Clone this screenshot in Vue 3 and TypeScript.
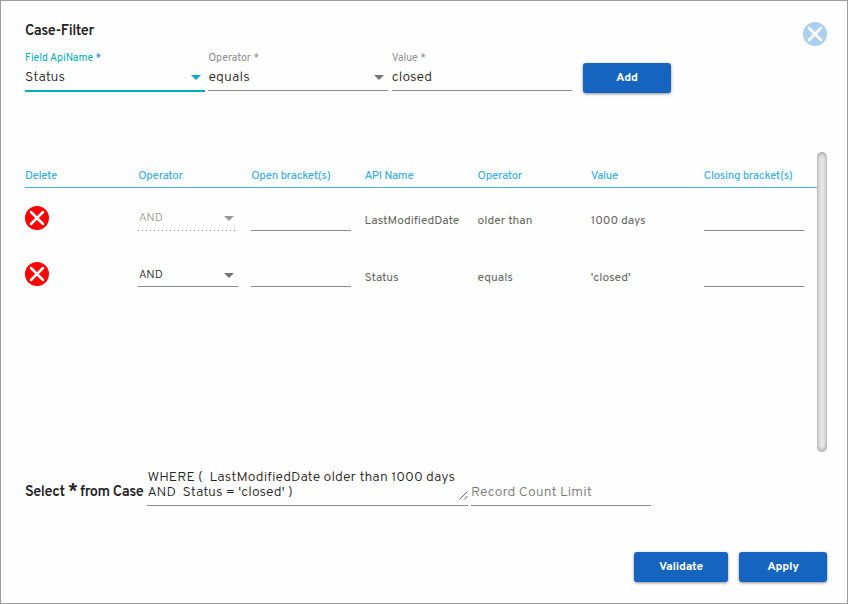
<script setup lang="ts">
import { ref } from 'vue'

interface Condition {
  id: number
  locked: boolean
  join: string
  open: string
  field: string
  operator: string
  value: string
  close: string
}

const fieldName = ref('Status')
const operator = ref('equals')
const filterValue = ref('closed')
const recordLimit = ref('')
const query = ref("WHERE (  LastModifiedDate older than 1000 days\nAND  Status = 'closed' )")

const conditions = ref<Condition[]>([
  { id: 1, locked: true, join: 'AND', open: '', field: 'LastModifiedDate', operator: 'older than', value: '1000 days', close: '' },
  { id: 2, locked: false, join: 'AND', open: '', field: 'Status', operator: 'equals', value: "'closed'", close: '' },
])

function remove(id: number) {
  conditions.value = conditions.value.filter((c) => c.id !== id)
}
</script>

<template>
  <main class="dialog">
    <header class="head">
      <h1 class="title">Case-Filter</h1>
      <button class="icon-btn close" aria-label="Close">
        <svg viewBox="0 0 24 24" width="24" height="24">
          <circle cx="12" cy="12" r="12" fill="#abcfee" />
          <path d="M6 6 18 18M18 6 6 18" stroke="#fff" stroke-width="2.7" stroke-linecap="round" />
        </svg>
      </button>
    </header>

    <section class="form">
      <div class="field active">
        <div class="label"><span>Field ApiName</span> <span class="star">*</span></div>
        <div class="control">
          <span>{{ fieldName }}</span>
          <svg class="arrow" width="10" height="5" viewBox="0 0 10 5"><path d="M0 0h10L5 5z" fill="currentColor" /></svg>
        </div>
      </div>
      <div class="field">
        <div class="label">Operator *</div>
        <div class="control">
          <span>{{ operator }}</span>
          <svg class="arrow" width="10" height="5" viewBox="0 0 10 5"><path d="M0 0h10L5 5z" fill="currentColor" /></svg>
        </div>
      </div>
      <div class="field">
        <div class="label">Value *</div>
        <div class="control"><span>{{ filterValue }}</span></div>
      </div>
      <button class="btn add">Add</button>
    </section>

    <section class="list">
      <div class="table">
        <div class="row thead">
          <span>Delete</span>
          <span>Operator</span>
          <span>Open bracket(s)</span>
          <span>API Name</span>
          <span>Operator</span>
          <span>Value</span>
          <span>Closing bracket(s)</span>
        </div>
        <div v-for="c in conditions" :key="c.id" class="row item">
          <button class="icon-btn" aria-label="Delete" @click="remove(c.id)">
            <svg viewBox="0 0 24 24" width="24" height="24">
              <circle cx="12" cy="12" r="12" fill="#f00" />
              <path d="M6 6 18 18M18 6 6 18" stroke="#fff" stroke-width="2.5" stroke-linecap="round" />
            </svg>
          </button>
          <div class="select" :class="{ locked: c.locked }">
            <span>{{ c.join }}</span>
            <svg class="arrow" width="10" height="5" viewBox="0 0 10 5"><path d="M0 0h10L5 5z" fill="currentColor" /></svg>
          </div>
          <div class="bracket">{{ c.open }}</div>
          <span class="cell">{{ c.field }}</span>
          <span class="cell">{{ c.operator }}</span>
          <span class="cell">{{ c.value }}</span>
          <div class="bracket">{{ c.close }}</div>
        </div>
      </div>
      <div class="scrollbar"></div>
    </section>

    <section class="query">
      <div class="select-text">Select <span class="big-star">*</span> from Case</div>
      <div class="where">
        <div class="where-text">{{ query }}</div>
        <svg class="grip" width="9" height="9" viewBox="0 0 9 9"><path d="M.5 8.5l8-8M5 8.5 8.5 5" stroke="#555" stroke-width=".9" fill="none" /></svg>
      </div>
      <div class="limit">{{ recordLimit || 'Record Count Limit' }}</div>
    </section>

    <footer class="actions">
      <button class="btn validate">Validate</button>
      <button class="btn">Apply</button>
    </footer>
  </main>
</template>

<style>
body {
  background: #fff;
}
</style>

<style scoped>
.dialog {
  box-sizing: border-box;
  width: 848px;
  height: 604px;
  padding: 21px 20px 0 24px;
  border: 1px solid #9c9c9c;
  background: #fefefe;
  font-family: Overpass, Roboto, "Liberation Sans", sans-serif;
  color: #333;
  overflow: hidden;
  white-space: nowrap;
}
.head {
  display: flex;
  justify-content: space-between;
  height: 25px;
}
.title {
  margin: 0;
  font-size: 14.5px;
  line-height: 19px;
  font-weight: 600;
  letter-spacing: -0.45px;
  color: #222;
}
.icon-btn {
  width: 24px;
  height: 24px;
  padding: 0;
  border: 0;
  background: none;
}
.icon-btn svg {
  display: block;
}
.form {
  display: flex;
  height: 105px;
  gap: 3.4px;
}
.field {
  width: 180px;
  height: 44px;
  border-bottom: 1px solid #8c8c8c;
  box-sizing: border-box;
}
.field,
.add {
  flex: none;
}
.field.active {
  height: 45px;
  border-bottom: 2px solid #00acc1;
}
.label {
  height: 20px;
  font-size: 10.5px;
  line-height: 23px;
  letter-spacing: 0;
  color: #8d8d8d;
}
.active .label {
  color: #00acc1;
}
.label .star {
  color: #1976d2;
}
.control {
  display: flex;
  align-items: center;
  justify-content: space-between;
  height: 20px;
  padding-right: 4px;
  font-size: 14px;
  font-weight: 300;
  letter-spacing: 0.1px;
  color: #222;
}
.control span {
  line-height: 22px;
  padding-top: 2px;
}
.arrow {
  color: #757575;
}
.active .arrow {
  color: #00acc1;
}
.btn {
  width: 88px;
  height: 30px;
  padding: 0;
  border: 0;
  border-radius: 3px;
  background: #1565c0;
  box-shadow: 0 1px 3px rgba(0, 0, 0, 0.45);
  color: #fff;
  font: 700 12px Overpass, Roboto, "Liberation Sans", sans-serif;
  letter-spacing: -0.2px;
}
.add {
  margin: 16px 0 0 7.8px;
}
.list {
  display: flex;
  height: 300px;
}
.table {
  width: 792px;
  flex: none;
}
.row {
  display: grid;
  grid-template-columns: repeat(7, 1fr);
}
.thead {
  height: 36px;
  box-sizing: border-box;
  border-bottom: 1px solid #45b4e3;
  padding-top: 15px;
  font-size: 11.5px;
  line-height: 18px;
  font-weight: 500;
  letter-spacing: -0.32px;
  color: #3db1e3;
}
.item {
  height: 56px;
  font-size: 12px;
  align-items: start;
}
.item .icon-btn {
  margin-top: 18px;
}
.select {
  display: flex;
  align-items: center;
  justify-content: space-between;
  box-sizing: border-box;
  width: 100px;
  height: 28px;
  margin-top: 15px;
  padding: 3px 4px 0 0.5px;
  border-bottom: 1px solid #8c8c8c;
  font-size: 12px;
  font-weight: 300;
  color: #222;
}
.select span {
  padding-top: 2px;
}
.select .arrow {
  margin-top: 2px;
}
.select.locked {
  border-bottom: 0;
  padding-top: 1px;
  padding-bottom: 1px;
  color: #999;
  background: repeating-linear-gradient(90deg, #8c8c8c 0 1px, transparent 1px 4px) left bottom / 99px 1px no-repeat;
}
.locked .arrow {
  color: #999;
}
.bracket {
  box-sizing: border-box;
  width: 100px;
  height: 28px;
  margin-top: 15px;
  border-bottom: 1px solid #8c8c8c;
}
.cell {
  margin-top: 24px;
  line-height: 18px;
  color: #666;
}
.item:last-child .cell {
  margin-top: 25px;
}
.scrollbar {
  width: 10px;
  height: 300px;
  flex: none;
  border-radius: 5px;
  background: #ebebeb;
  box-shadow: inset 0 0 5px #8b8585;
}
.query {
  display: flex;
  height: 100px;
  padding-top: 17px;
  box-sizing: border-box;
}
.select-text {
  width: 122px;
  flex: none;
  padding-top: 14px;
  font-size: 14.5px;
  line-height: 19px;
  font-weight: 600;
  letter-spacing: -0.4px;
  color: #222;
}
.big-star {
  font-size: 19px;
  line-height: 1px;
  vertical-align: -1px;
  margin-right: -1px;
}
.where {
  display: flex;
  align-items: flex-end;
  justify-content: space-between;
  width: 321px;
  height: 37px;
  box-sizing: border-box;
  border-bottom: 1px solid #8c8c8c;
  padding-bottom: 5px;
  padding-left: 0.5px;
}
.where-text {
  font-size: 14px;
  line-height: 15px;
  font-weight: 300;
  letter-spacing: 0.08px;
  color: #222;
  white-space: pre;
}
.grip {
  flex: none;
  margin-left: -9px;
}
.limit {
  width: 180px;
  height: 37px;
  margin-left: 3px;
  box-sizing: border-box;
  border-bottom: 1px solid #8c8c8c;
  padding-top: 14px;
  font-size: 14px;
  line-height: 19px;
  font-weight: 300;
  letter-spacing: 0.08px;
  color: #777;
}
.actions {
  display: flex;
  justify-content: flex-end;
  gap: 11px;
}
.validate {
  width: 94px;
}
</style>
